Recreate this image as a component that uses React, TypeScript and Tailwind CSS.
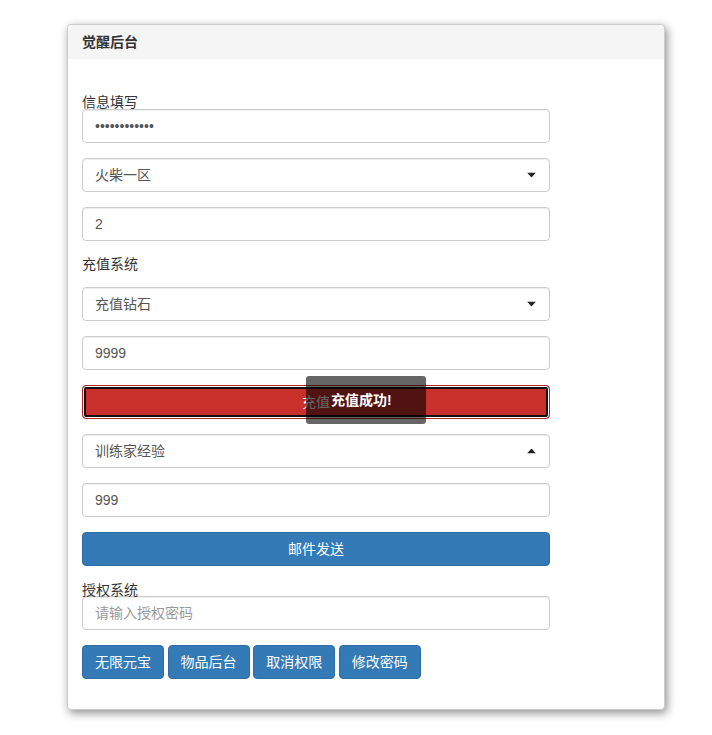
import React from "react";

const FONT = {
  fontFamily: '"Liberation Sans", Arial, "Noto Sans CJK SC", sans-serif',
};

const Caret: React.FC<{ up?: boolean }> = ({ up }) => (
  <svg
    width="9"
    height="5"
    viewBox="0 0 9 5"
    className="absolute right-[14px] top-1/2 -translate-y-1/2 pointer-events-none"
  >
    {up ? <path d="M0 5 L4.5 0 L9 5 Z" fill="#222" /> : <path d="M0 0 L4.5 5 L9 0 Z" fill="#222" />}
  </svg>
);

const TextField: React.FC<{ value?: string; placeholder?: string; type?: string; className?: string }> = ({
  value,
  placeholder,
  type = "text",
  className = "mb-[15px]",
}) => (
  <input
    type={type}
    defaultValue={value}
    placeholder={placeholder}
    style={FONT}
    className={`block w-full h-[34px] px-3 text-[14px] text-[#555] bg-white border border-[#ccc] rounded-[4px] shadow-[inset_0_1px_1px_rgba(0,0,0,0.075)] outline-none placeholder:text-[#999] ${className}`}
  />
);

const SelectField: React.FC<{ label: string; up?: boolean }> = ({ label, up }) => (
  <div className="relative mb-[15px]">
    <div className="flex items-center w-full h-[34px] px-3 text-[14px] text-[#555] bg-white border border-[#ccc] rounded-[4px] shadow-[inset_0_1px_1px_rgba(0,0,0,0.075)]">
      {label}
    </div>
    <Caret up={up} />
  </div>
);

const SmallButton: React.FC<{ label: string }> = ({ label }) => (
  <button
    style={FONT}
    className="h-[34px] w-[82px] text-[14px] text-white bg-[#337ab7] border border-[#2e6da4] rounded-[4px]"
  >
    {label}
  </button>
);

export default function App() {
  return (
    <div style={FONT} className="min-h-[735px] bg-white pt-[24px] pl-[67px]">
      <div className="relative w-[598px] bg-white border border-[#ccc] rounded-[4px] shadow-[2px_3px_10px_rgba(0,0,0,0.45)]">
        <div className="h-[34px] flex items-center px-[14px] bg-[#f5f5f5] rounded-t-[4px]">
          <h3 className="text-[14px] font-bold text-[#333] leading-none">觉醒后台</h3>
        </div>

        <div className="px-[14px] pt-[33px] pb-[30px]">
          <div className="w-[468px] text-[14px] text-[#333]">
            <label className="block leading-[20px] mb-[-3px]">信息填写</label>
            <TextField type="password" value="123456789012" />
            <SelectField label="火柴一区" />
            <TextField value="2" />

            <label className="block leading-[20px] mt-[-2px] mb-[13px]">充值系统</label>
            <SelectField label="充值钻石" />
            <TextField value="9999" />
            <button
              style={FONT}
              className="block w-full h-[34px] mb-[15px] text-[14px] text-white bg-[#c9302c] border border-[#ac2925] rounded-[4px] shadow-[inset_0_0_0_1px_#ffffff,inset_0_0_0_3px_#111111]"
            >
              充值
            </button>
            <SelectField label="训练家经验" up />
            <TextField value="999" />
            <button
              style={FONT}
              className="block w-full h-[34px] mb-[15px] text-[14px] text-white bg-[#337ab7] border border-[#2e6da4] rounded-[4px]"
            >
              邮件发送
            </button>

            <label className="block leading-[20px] mt-[-1px] mb-[-4px]">授权系统</label>
            <TextField placeholder="请输入授权密码" />

            <div className="flex gap-[3.6px]">
              <SmallButton label="无限元宝" />
              <SmallButton label="物品后台" />
              <SmallButton label="取消权限" />
              <SmallButton label="修改密码" />
            </div>
          </div>
        </div>

        <div className="absolute left-[238px] top-[351px] w-[120px] h-[48px] flex items-center pl-[25px] bg-[rgba(0,0,0,0.6)] rounded-[3px] text-[14px] font-bold text-white">
          充值成功!
        </div>
      </div>
    </div>
  );
}
